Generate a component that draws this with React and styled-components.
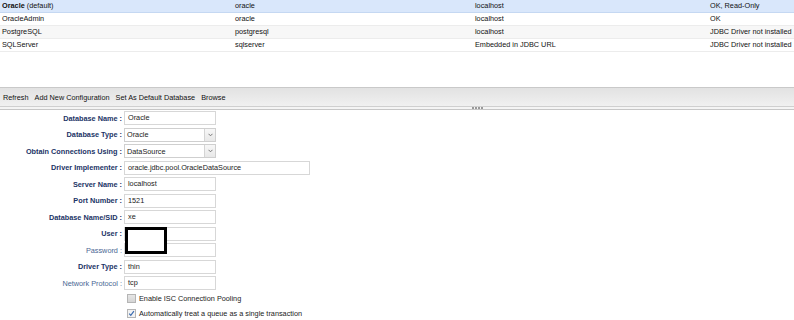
import styled, { createGlobalStyle } from 'styled-components'

const GlobalStyle = createGlobalStyle`
    html, body {
        margin: 0;
        padding: 0;
        background: #fff;
    }
    body {
        font-family: "Liberation Sans", Arial, sans-serif;
        font-size: 7.3px;
        color: #222;
    }
`

const databases = [
    { name: 'Oracle', def: true, type: 'oracle', host: 'localhost', status: 'OK, Read-Only' },
    { name: 'OracleAdmin', type: 'oracle', host: 'localhost', status: 'OK' },
    { name: 'PostgreSQL', type: 'postgresql', host: 'localhost', status: 'JDBC Driver not installed' },
    { name: 'SQLServer', type: 'sqlserver', host: 'Embedded in JDBC URL', status: 'JDBC Driver not installed' },
]

const fields = [
    { label: 'Database Name', value: 'Oracle' },
    { label: 'Database Type', value: 'Oracle', select: true },
    { label: 'Obtain Connections Using', value: 'DataSource', select: true },
    { label: 'Driver Implementer', value: 'oracle.jdbc.pool.OracleDataSource', wide: true },
    { label: 'Server Name', value: 'localhost' },
    { label: 'Port Number', value: '1521' },
    { label: 'Database Name/SID', value: 'xe' },
    { label: 'User', value: '' },
    { label: 'Password', value: '', optional: true },
    { label: 'Driver Type', value: 'thin' },
    { label: 'Network Protocol', value: 'tcp', optional: true },
]

const App = () => {
    return (
        <Page>
            <GlobalStyle />
            <TablePane>
                <Table>
                    <colgroup>
                        <col style={{ width: 233 }} />
                        <col style={{ width: 240 }} />
                        <col style={{ width: 235 }} />
                        <col />
                    </colgroup>
                    <tbody>
                        {databases.map((db, i) => (
                            <Row key={db.name} $selected={i === 0} $alt={i === 2} $first={i === 0}>
                                <Cell>
                                    {db.def ? <><b>{db.name}</b> (default)</> : db.name}
                                </Cell>
                                <Cell>{db.type}</Cell>
                                <Cell>{db.host}</Cell>
                                <Cell>{db.status}</Cell>
                            </Row>
                        ))}
                    </tbody>
                </Table>
            </TablePane>
            <Toolbar>
                <ToolButton>Refresh</ToolButton>
                <ToolButton>Add New Configuration</ToolButton>
                <ToolButton>Set As Default Database</ToolButton>
                <ToolButton>Browse</ToolButton>
            </Toolbar>
            <Splitter>
                <Grip>
                    <i /><i /><i /><i />
                </Grip>
            </Splitter>
            <Form>
                {fields.map((f) => (
                    <FieldRow key={f.label}>
                        <Label $optional={f.optional}>{f.label} :</Label>
                        {f.select ? (
                            <Select>
                                <span>{f.value}</span>
                                <Arrow>
                                    <svg width="5" height="4" viewBox="0 0 5 4">
                                        <path d="M0.5 0.8 L2.5 2.8 L4.5 0.8" fill="none" stroke="#777" strokeWidth="1" />
                                    </svg>
                                </Arrow>
                            </Select>
                        ) : (
                            <Input $wide={f.wide}>{f.value}</Input>
                        )}
                        {f.label === 'User' && <Redaction />}
                    </FieldRow>
                ))}
                <CheckRow>
                    <Check />
                    <span>Enable ISC Connection Pooling</span>
                </CheckRow>
                <CheckRow>
                    <Check $checked>
                        <svg width="7" height="7" viewBox="0 0 7 7">
                            <path d="M1.2 3.6 L2.8 5.3 L5.9 1.2" fill="none" stroke="#3a6cb0" strokeWidth="1.2" />
                        </svg>
                    </Check>
                    <span>Automatically treat a queue as a single transaction</span>
                </CheckRow>
            </Form>
        </Page>
    )
}

export default App

const Page = styled.div`
    width: 794px;
    height: 320px;
    overflow: hidden;
    display: flex;
    flex-direction: column;
`

const TablePane = styled.div`
    height: 87px;
    flex-shrink: 0;
`

const Table = styled.table`
    width: 100%;
    border-collapse: collapse;
    table-layout: fixed;
`

const Row = styled.tr`
    height: ${(p) => (p.$first ? '12px' : '13px')};
    background: ${(p) => (p.$selected ? '#d9e7fb' : p.$alt ? '#f7f7f7' : '#fff')};
    border-bottom: 1px solid ${(p) => (p.$selected ? '#c5d8f2' : '#ececec')};
`

const Cell = styled.td`
    padding: 0 0 0 2px;
    white-space: nowrap;
    overflow: visible;
    line-height: 10px;
    color: #111;
    b {
        font-weight: bold;
    }
`

const Toolbar = styled.div`
    height: 18px;
    display: flex;
    align-items: center;
    gap: 6px;
    padding: 0 0 0 3px;
    border-top: 1px solid #c9c9c9;
    border-bottom: 1px solid #cfcfcf;
    background: linear-gradient(#e2e2e2, #f0f0f0);
    flex-shrink: 0;
`

const ToolButton = styled.span`
    color: #111;
    cursor: pointer;
`

const Splitter = styled.div`
    height: 2px;
    background: #f4f4f4;
    border-bottom: 1px solid #c6c6c6;
    display: flex;
    align-items: center;
    padding-left: 472px;
    flex-shrink: 0;
`

const Grip = styled.div`
    display: flex;
    gap: 1px;
    i {
        width: 2px;
        height: 2px;
        background: #999;
    }
`

const Form = styled.div`
    display: grid;
    grid-template-columns: 122px auto;
    column-gap: 2px;
    row-gap: 2.5px;
    padding-top: 1px;
    align-items: center;
    justify-content: start;
`

const FieldRow = styled.div`
    display: contents;
`

const Label = styled.div`
    text-align: right;
    white-space: nowrap;
    font-weight: ${(p) => (p.$optional ? 'normal' : 'bold')};
    color: ${(p) => (p.$optional ? '#4a6894' : '#1b3466')};
`

const Input = styled.div`
    width: ${(p) => (p.$wide ? '186px' : '92px')};
    height: 14px;
    box-sizing: border-box;
    border: 1px solid #d7d7d7;
    background: #fff;
    padding: 0 3px;
    line-height: 12px;
    color: #222;
    white-space: nowrap;
`

const Select = styled.div`
    width: 92px;
    height: 14px;
    box-sizing: border-box;
    border: 1px solid #cfcfcf;
    background: #fff;
    display: flex;
    align-items: center;
    span {
        flex: 1;
        padding-left: 2px;
        color: #222;
    }
`

const Arrow = styled.div`
    width: 11px;
    height: 12px;
    box-sizing: border-box;
    border-left: 1px solid #d4d4d4;
    background: linear-gradient(#f7f7f7, #e8e8e8);
    display: flex;
    align-items: center;
    justify-content: center;
`

const Redaction = styled.div`
    position: absolute;
    left: 125px;
    top: 227px;
    width: 42px;
    height: 27px;
    box-sizing: border-box;
    border: 3px solid #000;
    background: #fff;
`

const CheckRow = styled.div`
    grid-column: 2;
    display: flex;
    align-items: center;
    gap: 3px;
    height: 12px;
    padding-left: 3px;
    color: #222;
    white-space: nowrap;
`

const Check = styled.div`
    width: 7px;
    height: 7px;
    border: 1px solid #b5b5b5;
    background: ${(p) => (p.$checked ? '#f2f2f2' : 'linear-gradient(#e6e6e6, #d5d5d5)')};
    display: flex;
    align-items: center;
    justify-content: center;
    svg {
        display: block;
    }
`
